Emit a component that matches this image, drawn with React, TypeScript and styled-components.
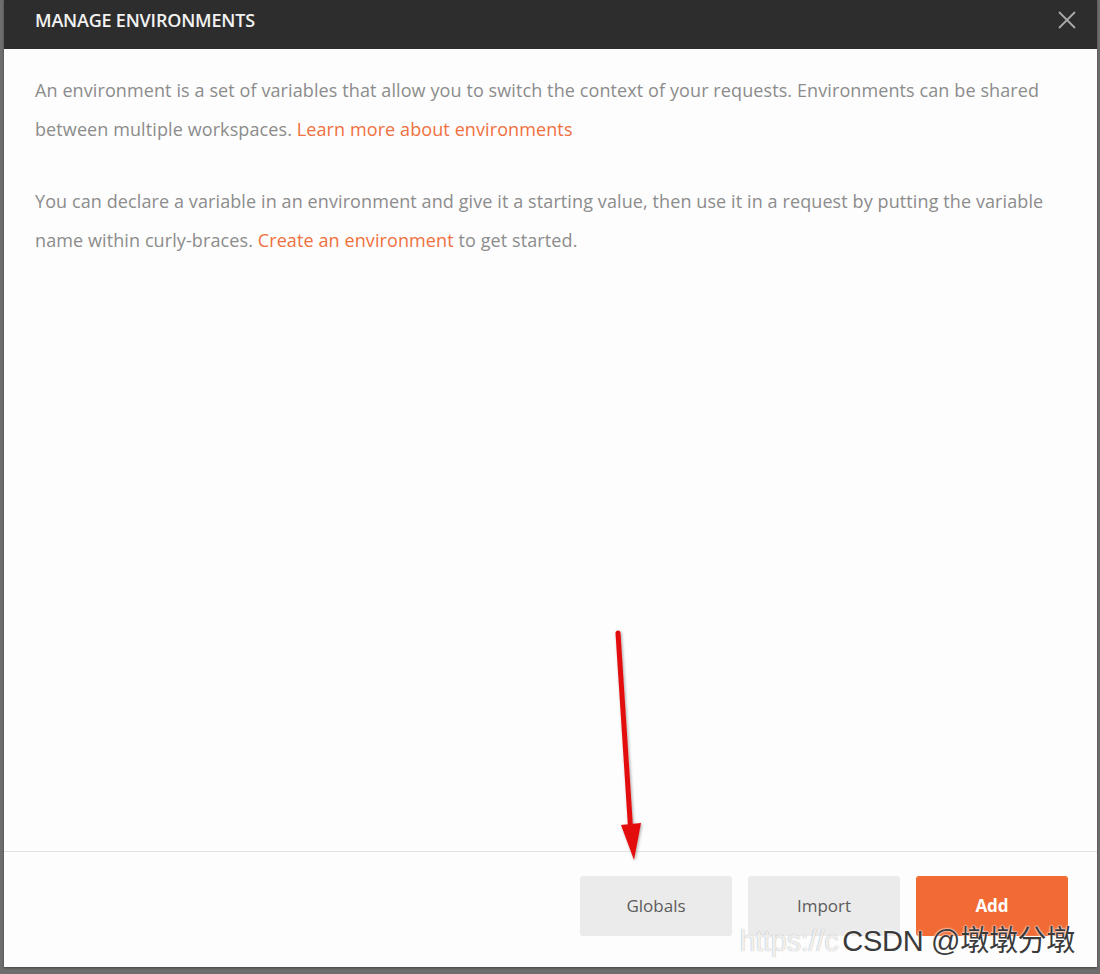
import React from "react";
import styled, { createGlobalStyle } from "styled-components";

const GlobalStyle = createGlobalStyle`
  html, body {
    margin: 0;
    padding: 0;
    background: #6d6d6d;
  }
  * {
    box-sizing: border-box;
  }
`;

function CloseIcon() {
  return (
    <svg width="18" height="18" viewBox="0 0 18 18">
      <path d="M1 1 L17 17 M17 1 L1 17" stroke="#a9a9a9" strokeWidth="1.8" fill="none" />
    </svg>
  );
}

function RedArrow() {
  return (
    <svg width="60" height="260" viewBox="0 0 60 260">
      <defs>
        <filter id="shade" x="-50%" y="-10%" width="200%" height="120%">
          <feDropShadow dx="1" dy="1" stdDeviation="1.5" floodColor="#000" floodOpacity="0.35" />
        </filter>
      </defs>
      <g filter="url(#shade)">
        <path d="M20 13 L33 215" stroke="#e30e0e" strokeWidth="5" strokeLinecap="round" fill="none" />
        <polygon points="23,205 43,203 36,240" fill="#e30e0e" />
      </g>
    </svg>
  );
}

function App() {
  return (
    <>
      <GlobalStyle />
      <Page>
        <Modal>
          <Header>
            <Title>MANAGE ENVIRONMENTS</Title>
            <CloseButton aria-label="Close">
              <CloseIcon />
            </CloseButton>
          </Header>
          <Body>
            <Paragraph>
              An environment is a set of variables that allow you to switch the context of your requests. Environments can be shared
              <br />
              between multiple workspaces. <Link href="#">Learn more about environments</Link>
            </Paragraph>
            <Paragraph>
              You can declare a variable in an environment and give it a starting value, then use it in a request by putting the variable
              <br />
              name within curly-braces. <Link href="#">Create an environment</Link> to get started.
            </Paragraph>
          </Body>
          <Footer>
            <Button>Globals</Button>
            <Button>Import</Button>
            <Button primary>Add</Button>
          </Footer>
          <Arrow>
            <RedArrow />
          </Arrow>
          <Watermark>
            <Faint>https://c</Faint>CSDN @墩墩分墩
          </Watermark>
        </Modal>
      </Page>
    </>
  );
}

const Page = styled.div`
  height: 974px;
  padding: 0 3px 7px 4px;
`;

const Modal = styled.div`
  position: relative;
  height: 967px;
  display: flex;
  flex-direction: column;
  background: #fdfdfd;
  box-shadow: 0 1px 2px rgba(0, 0, 0, 0.4);
  font-family: "Open Sans", "Noto Sans", sans-serif;
`;

const Header = styled.div`
  height: 49px;
  flex-shrink: 0;
  display: flex;
  align-items: center;
  justify-content: space-between;
  padding: 0 21px 9px 31px;
  background: #2d2d2d;
`;

const Title = styled.h1`
  margin: 0;
  color: #f2f2f2;
  font-size: 18px;
  font-weight: 600;
  letter-spacing: -0.2px;
`;

const CloseButton = styled.button`
  display: flex;
  padding: 0;
  border: none;
  background: none;
  cursor: pointer;
`;

const Body = styled.div`
  flex: 1;
  padding: 22px 31px 0;
`;

const Paragraph = styled.p`
  margin: 0 0 33px;
  color: #8c8c8c;
  font-size: 18px;
  letter-spacing: 0.1px;
  line-height: 39px;
  white-space: nowrap;
`;

const Link = styled.a`
  color: #f0703e;
  text-decoration: none;
`;

const Footer = styled.div`
  height: 116px;
  flex-shrink: 0;
  display: flex;
  justify-content: flex-end;
  align-items: flex-start;
  gap: 16px;
  padding: 24px 29px 0 0;
  border-top: 1px solid #e2e2e2;
`;

const Button = styled.button<{ primary?: boolean }>`
  width: 152px;
  height: 60px;
  border: none;
  border-radius: 3px;
  background: ${(p) => (p.primary ? "#f26a34" : "#ebebeb")};
  color: ${(p) => (p.primary ? "#ffffff" : "#5c5c5c")};
  font-family: inherit;
  font-size: 17px;
  font-weight: ${(p) => (p.primary ? 700 : 400)};
  padding-bottom: 3px;
  cursor: pointer;
`;

const Arrow = styled.div`
  position: absolute;
  left: 594px;
  top: 620px;
  pointer-events: none;
`;

const Watermark = styled.div`
  position: absolute;
  right: 22px;
  bottom: 8px;
  font-family: "Liberation Sans", "Noto Sans CJK SC", sans-serif;
  font-size: 29px;
  color: #3a3a3a;
  letter-spacing: -0.3px;
  text-shadow: 0 0 2px #fff, 0 0 2px #fff;
  white-space: nowrap;
  pointer-events: none;
`;

const Faint = styled.span`
  color: rgba(255, 255, 255, 0.85);
  text-shadow: 0 0 1px #999;
  margin-right: 4px;
`;

export default App;
